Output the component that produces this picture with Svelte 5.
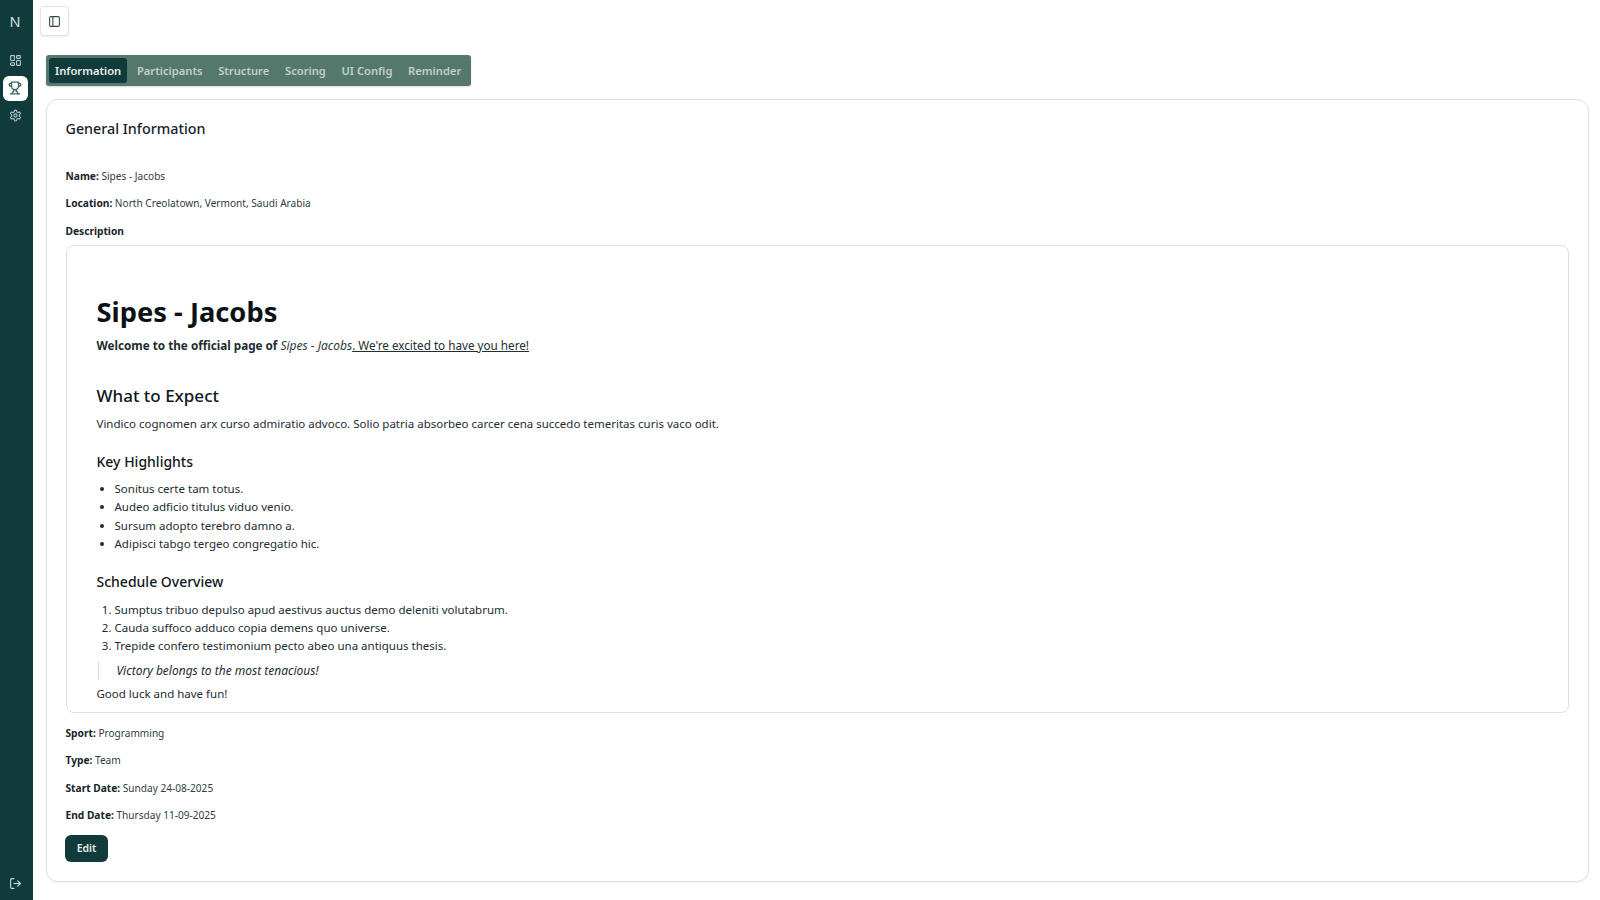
<script>
  const tabs = ['Information', 'Participants', 'Structure', 'Scoring', 'UI Config', 'Reminder'];
</script>

<div class="shell">
  <aside class="rail">
    <div class="logo">N</div>
    <nav class="railnav">
      <a class="navitem" href="#a" aria-label="Dashboard">
        <svg viewBox="0 0 24 24"><rect x="3" y="3" width="7" height="9" rx="1"/><rect x="14" y="3" width="7" height="5" rx="1"/><rect x="14" y="12" width="7" height="9" rx="1"/><rect x="3" y="16" width="7" height="5" rx="1"/></svg>
      </a>
      <a class="navitem active" href="#b" aria-label="Tournaments">
        <svg viewBox="0 0 24 24"><path d="M6 9H4.500a2.500 2.500 0 0 1 0-5H6"/><path d="M18 9h1.500a2.500 2.500 0 0 0 0-5H18"/><path d="M4 22h16"/><path d="M10 14.660V17c0 .550-.470.980-.970 1.210C7.850 18.750 7 20.240 7 22"/><path d="M14 14.660V17c0 .550.470.980.970 1.210C16.150 18.750 17 20.240 17 22"/><path d="M18 2H6v7a6 6 0 0 0 12 0V2Z"/></svg>
      </a>
      <a class="navitem" href="#c" aria-label="Settings">
        <svg viewBox="0 0 24 24"><path d="M12.220 2h-.440a2 2 0 0 0-2 2v.180a2 2 0 0 1-1 1.730l-.430.250a2 2 0 0 1-2 0l-.150-.080a2 2 0 0 0-2.730.730l-.220.380a2 2 0 0 0 .730 2.730l.150.100a2 2 0 0 1 1 1.720v.510a2 2 0 0 1-1 1.740l-.150.090a2 2 0 0 0-.730 2.730l.220.380a2 2 0 0 0 2.730.730l.150-.080a2 2 0 0 1 2 0l.430.250a2 2 0 0 1 1 1.730V20a2 2 0 0 0 2 2h.440a2 2 0 0 0 2-2v-.180a2 2 0 0 1 1-1.730l.430-.250a2 2 0 0 1 2 0l.150.080a2 2 0 0 0 2.730-.730l.220-.390a2 2 0 0 0-.730-2.730l-.150-.080a2 2 0 0 1-1-1.740v-.500a2 2 0 0 1 1-1.740l.150-.090a2 2 0 0 0 .730-2.730l-.220-.380a2 2 0 0 0-2.730-.730l-.150.080a2 2 0 0 1-2 0l-.430-.250a2 2 0 0 1-1-1.730V4a2 2 0 0 0-2-2z"/><circle cx="12" cy="12" r="3"/></svg>
      </a>
    </nav>
    <a class="logout" href="#d" aria-label="Log out">
      <svg viewBox="0 0 24 24"><path d="M9 21H5a2 2 0 0 1-2-2V5a2 2 0 0 1 2-2h4"/><polyline points="16 17 21 12 16 7"/><line x1="21" y1="12" x2="9" y2="12"/></svg>
    </a>
  </aside>

  <main class="main">
    <button class="toggle" aria-label="Toggle sidebar">
      <svg viewBox="0 0 24 24"><rect x="3" y="3" width="18" height="18" rx="2"/><path d="M9 3v18"/></svg>
    </button>

    <div class="tabs">
      {#each tabs as tab, i}
        <button class="tab" class:current={i === 0}>{tab}</button>
      {/each}
    </div>

    <section class="card">
      <h2 class="title">General Information</h2>
      <p class="field first"><b>Name:</b> Sipes - Jacobs</p>
      <p class="field"><b>Location:</b> North Creolatown, Vermont, Saudi Arabia</p>
      <p class="field desc"><b>Description</b></p>
      <div class="rich">
        <h1>Sipes - Jacobs</h1>
        <p class="welcome"><strong>Welcome to the official page of</strong>{' '}<em>Sipes - Jacobs</em><u>. We're excited to have you here!</u></p>
        <h2>What to Expect</h2>
        <p>Vindico cognomen arx curso admiratio advoco. Solio patria absorbeo carcer cena succedo temeritas curis vaco odit.</p>
        <h3>Key Highlights</h3>
        <ul>
          <li>Sonitus certe tam totus.</li>
          <li>Audeo adficio titulus viduo venio.</li>
          <li>Sursum adopto terebro damno a.</li>
          <li>Adipisci tabgo tergeo congregatio hic.</li>
        </ul>
        <h3 class="second">Schedule Overview</h3>
        <ol>
          <li>Sumptus tribuo depulso apud aestivus auctus demo deleniti volutabrum.</li>
          <li>Cauda suffoco adduco copia demens quo universe.</li>
          <li>Trepide confero testimonium pecto abeo una antiquus thesis.</li>
        </ol>
        <blockquote>Victory belongs to the most tenacious!</blockquote>
        <p class="end">Good luck and have fun!</p>
      </div>
      <p class="field after"><b>Sport:</b> Programming</p>
      <p class="field"><b>Type:</b> Team</p>
      <p class="field"><b>Start Date:</b> Sunday 24-08-2025</p>
      <p class="field"><b>End Date:</b> Thursday 11-09-2025</p>
      <button class="edit">Edit</button>
    </section>
  </main>
</div>

<style>
  :global(body) { margin: 0; background: #fff; }
  .shell { display: flex; height: 900px; overflow: hidden; font-family: "Noto Sans", "Open Sans", sans-serif; color: #17232a; }
  .rail { width: 33px; flex: none; box-sizing: border-box; padding-right: 3px; background: #113a3a; display: flex; flex-direction: column; align-items: center; color: #b7c9c6; }
  .logo { height: 43px; line-height: 43px; font-size: 14.500px; color: #d5e0de; }
  .railnav { display: flex; flex-direction: column; gap: 2.500px; margin-top: 5px; }
  .navitem { width: 25px; height: 25px; display: flex; align-items: center; justify-content: center; border-radius: 6px; color: #b7c9c6; }
  .navitem.active { background: #fff; color: #3c6a5f; }
  .active svg { width: 14px; height: 14px; stroke-width: 2.400; }
  svg { width: 13px; height: 13px; fill: none; stroke: currentColor; stroke-width: 2; stroke-linecap: round; stroke-linejoin: round; }
  .logout { margin-top: auto; margin-bottom: 10px; display: flex; color: #cfdcda; }
  .main { flex: 1; min-width: 0; padding: 6px 11px 0 13px; }
  .toggle { margin-left: -6px; width: 29px; height: 30px; padding: 0; display: flex; align-items: center; justify-content: center; background: #fff; border: 1px solid #dfe5e4; border-radius: 4px; box-shadow: 0 1px 2px rgba(0,0,0,.08); color: #33474a; }
  .tabs { display: inline-flex; margin-top: 19px; height: 31px; box-sizing: border-box; padding: 3px 4px 3px 3px; background: #55786c; border-radius: 3px; box-shadow: 0 1px 2px rgba(0,0,0,.15); gap: 3.700px; vertical-align: top; }
  .tab { border: 0; background: none; padding: 0 6px; font: 600 11.200px "Noto Sans", sans-serif; color: #c2d0cb; border-radius: 3px; white-space: nowrap; }
  .tab.current { background: #113a3a; color: #eaf0ee; }
  .card { margin-top: 13px; height: 783px; box-sizing: border-box; border: 1px solid #dbe2e1; border-radius: 12px; padding: 18.500px 19px 0 18.500px; box-shadow: 0 1px 2px rgba(0,0,0,.06); }
  .title { margin: 0; font-size: 14.300px; font-weight: 500; line-height: 20px; color: #17232a; }
  .field { margin: 0 0 10.400px; font-size: 10.100px; line-height: 17px; color: #303c42; }
  .field b { font-weight: 700; font-size: 10.200px; color: #17232a; }
  .field.first { margin-top: 29.500px; }
  .field.desc { margin-bottom: 5px; }
  .field.after { margin-top: 12px; }
  .rich { border: 1px solid #dbe2e1; border-radius: 8px; padding: 31px 30px 0; height: 468px; box-sizing: border-box; font-size: 11.500px; line-height: 18px; color: #222c31; }
  .rich h1 { margin: 19px 0 8px; font-size: 27.300px; line-height: 32px; font-weight: 700; color: #0b1216; }
  .rich h2 { margin: 29px 0 7px; font-size: 17px; line-height: 24px; font-weight: 500; color: #0f171b; }
  .rich h3 { margin: 19px 0 8px; font-size: 14px; line-height: 20px; font-weight: 500; color: #0f171b; }
  .rich h3.second { margin: 18px 0 9px; }
  .rich p { margin: 0; }
  .rich .welcome { font-size: 11.700px; }
  .rich .welcome em { font-size: 12px; }
  .rich ul, .rich ol { margin: 0; padding-left: 18px; }
  .rich ul li { line-height: 18.500px; }
  .rich em { color: #303c42; }
  .rich blockquote { margin: 7px 0 0 1px; padding: 0 0 0 18px; border-left: 1px solid #d5dcdb; font-style: italic; font-size: 12px; line-height: 18px; }
  .rich .end { margin-top: 5px; }
  .edit { margin: 0.500px 0 0 -0.500px; width: 43px; height: 27px; border: 0; border-radius: 6px; background: #113a3a; color: #e6eeec; font: 600 10.500px "Noto Sans", sans-serif; padding: 0; }
</style>
